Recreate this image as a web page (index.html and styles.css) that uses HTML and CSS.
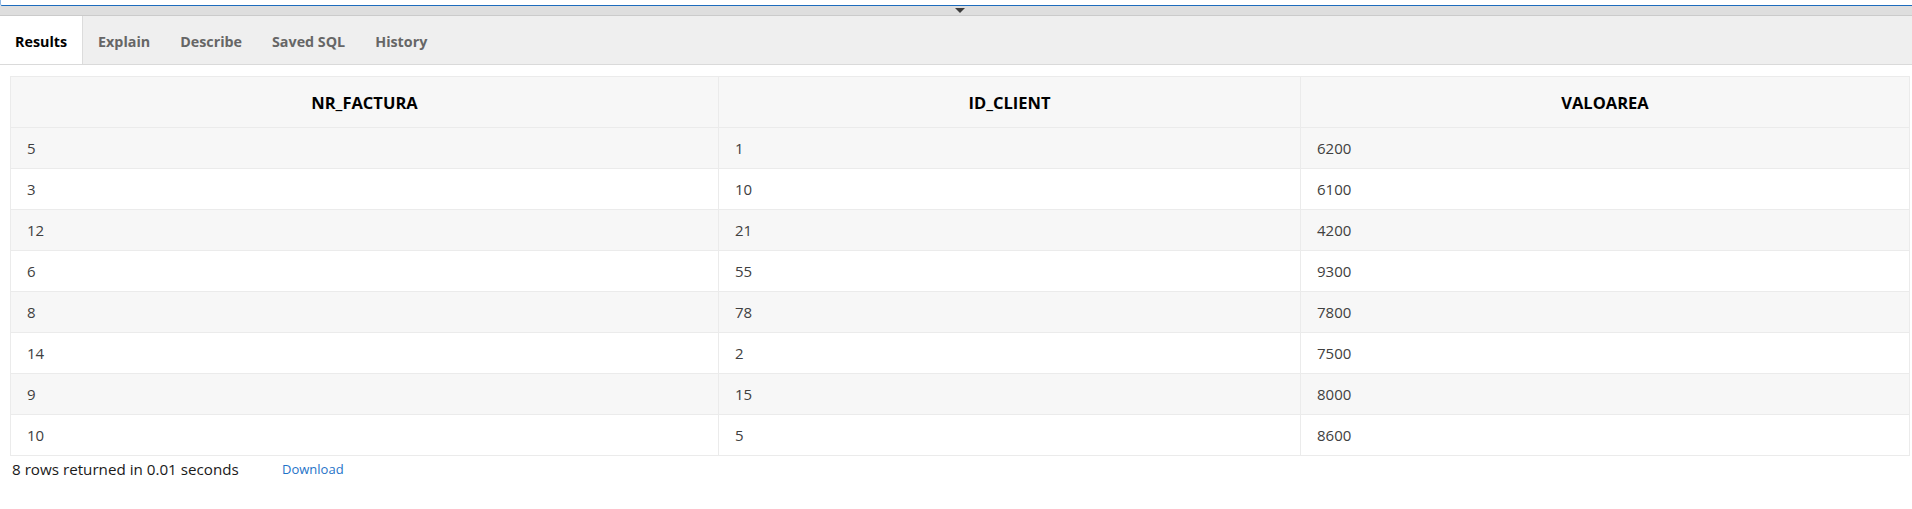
FILE: index.html
```html
<!DOCTYPE html>
<html>
<head>
<meta charset="utf-8">
<link rel="stylesheet" href="styles.css">
</head>
<body>
<div class="editor-edge"></div>
<div class="splitter"><span class="grip"></span></div>
<div class="tabs">
  <div class="tab active">Results</div>
  <div class="tab">Explain</div>
  <div class="tab">Describe</div>
  <div class="tab">Saved SQL</div>
  <div class="tab">History</div>
</div>
<div class="results">
  <table class="grid">
    <colgroup>
      <col class="c1"><col class="c2"><col class="c3">
    </colgroup>
    <thead>
      <tr><th>NR_FACTURA</th><th>ID_CLIENT</th><th>VALOAREA</th></tr>
    </thead>
    <tbody>
      <tr><td>5</td><td>1</td><td>6200</td></tr>
      <tr><td>3</td><td>10</td><td>6100</td></tr>
      <tr><td>12</td><td>21</td><td>4200</td></tr>
      <tr><td>6</td><td>55</td><td>9300</td></tr>
      <tr><td>8</td><td>78</td><td>7800</td></tr>
      <tr><td>14</td><td>2</td><td>7500</td></tr>
      <tr><td>9</td><td>15</td><td>8000</td></tr>
      <tr><td>10</td><td>5</td><td>8600</td></tr>
    </tbody>
  </table>
  <div class="footer">
    <span class="count">8 rows returned in 0.01 seconds</span>
    <a class="download" href="#">Download</a>
  </div>
</div>
</body>
</html>
```
FILE: styles.css
```css
html, body {
  margin: 0;
  padding: 0;
  background: #ffffff;
  font-family: "Open Sans", "Noto Sans", sans-serif;
}

.editor-edge {
  height: 5px;
  border-bottom: 1px solid #1d6cbd;
  border-left: 1px solid #8fb8e4;
  border-bottom-left-radius: 2px;
}

.splitter {
  height: 9px;
  background: #dedede;
  border-bottom: 1px solid #cbcbcb;
  display: flex;
  justify-content: center;
}

.grip {
  margin-top: 2px;
  margin-left: 8px;
  width: 0;
  height: 0;
  border-left: 5px solid transparent;
  border-right: 5px solid transparent;
  border-top: 5px solid #3c3c3c;
}

.tabs {
  display: flex;
  height: 48px;
  background: #efefef;
  border-bottom: 1px solid #dadada;
}

.tab {
  display: flex;
  align-items: center;
  padding: 2px 15px 0;
  font-size: 14.3px;
  font-weight: 700;
  color: #666666;
}

.tab.active {
  background: #ffffff;
  color: #000000;
  border-right: 1px solid #dcdcdc;
}

.results {
  padding: 11px 2px 0 10px;
}

.grid {
  width: 100%;
  border-collapse: collapse;
  table-layout: fixed;
  border: 1px solid #ebebeb;
}

.c1 { width: 708px; }
.c2 { width: 582px; }
.c3 { width: auto; }

.grid th {
  height: 50px;
  padding: 0;
  background: #f7f7f7;
  font-size: 16.5px;
  font-weight: 700;
  color: #000000;
  text-align: center;
  border: 1px solid #ebebeb;
}

.grid td {
  height: 40px;
  padding: 0 0 0 16px;
  font-size: 15px;
  color: #404040;
  border: 1px solid #ebebeb;
}

.grid tbody tr:nth-child(odd) td {
  background: #f7f7f7;
}

.footer {
  display: flex;
  align-items: center;
  height: 26px;
  padding-left: 2px;
}

.count {
  font-size: 15.2px;
  color: #1a1a1a;
  width: 270px;
}

.download {
  font-size: 13px;
  color: #1f73c8;
  text-decoration: none;
}
```
